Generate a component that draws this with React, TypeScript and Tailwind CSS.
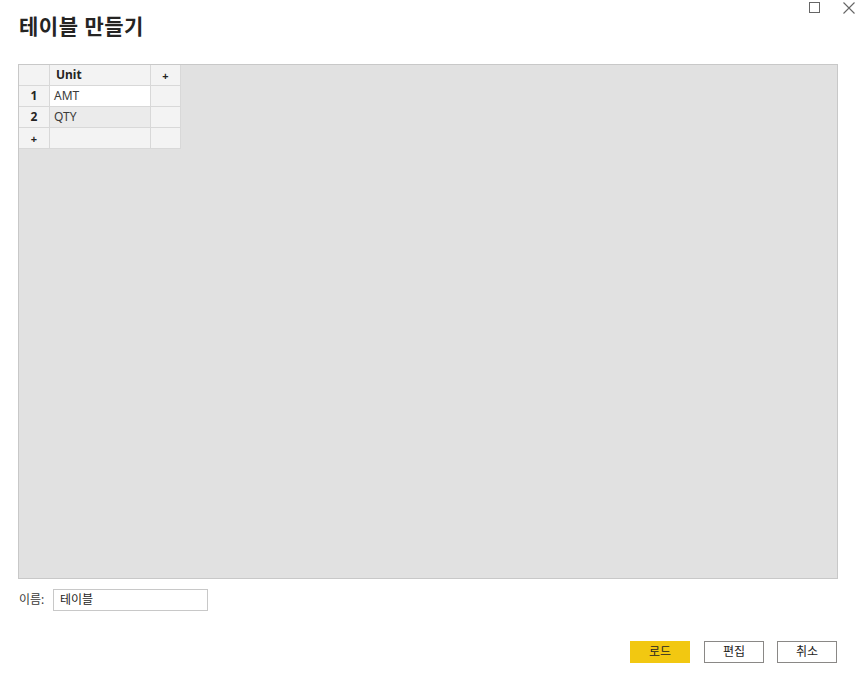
const font = { fontFamily: '"Noto Sans", "Noto Sans CJK KR", sans-serif' };

const rows = [
  { n: '1', v: 'AMT', bg: 'bg-white' },
  { n: '2', v: 'QTY', bg: 'bg-[#ebebeb]' },
];

export default function App() {
  return (
    <div className="relative w-[856px] h-[691px] bg-white text-[#252423] flex flex-col" style={font}>
      <div className="absolute top-[1px] right-0 flex items-start gap-[23px] pr-[1px]">
        <div className="w-[11px] h-[11px] border border-[#666] mt-[1px]" />
        <svg width="12" height="12" viewBox="0 0 12 12" className="mt-[1px]">
          <path d="M0.5 0.5 L11.5 11.5 M11.5 0.5 L0.5 11.5" stroke="#666" strokeWidth="1.1" />
        </svg>
      </div>

      <h1 className="pl-[19px] pt-[11px] h-[64px] text-[21px] font-bold leading-[30px] tracking-[0.5px]">테이블 만들기</h1>

      <div className="mx-[18px] w-[820px] h-[515px] border border-[#c8c8c8] bg-[#e1e1e1]">
        <div className="grid grid-cols-[31px_101px_30px] w-max text-[12px] leading-none">
          <div className="h-[21px] bg-[#f3f3f3] border-r border-b border-[#d8d8d8]" />
          <div className="h-[21px] bg-[#f3f3f3] border-r border-b border-[#d8d8d8] flex items-center pl-[6px] font-bold">Unit</div>
          <div className="h-[21px] bg-[#f3f3f3] border-r border-b border-[#d8d8d8] flex items-center justify-center font-bold text-[11px]">+</div>
          {rows.map((r) => (
            <div key={r.n} className="contents">
              <div className="h-[21px] bg-[#f3f3f3] border-r border-b border-[#d8d8d8] flex items-center justify-center font-bold">{r.n}</div>
              <div className={`h-[21px] ${r.bg} border-r border-b border-[#d8d8d8] flex items-center pl-[4px] text-[#3b3a39]`}>{r.v}</div>
              <div className="h-[21px] bg-[#f3f3f3] border-r border-b border-[#d8d8d8]" />
            </div>
          ))}
          <div className="h-[21px] bg-[#f3f3f3] border-r border-b border-[#d8d8d8] flex items-center justify-center font-bold text-[11px]">+</div>
          <div className="h-[21px] bg-[#f3f3f3] border-r border-b border-[#d8d8d8]" />
          <div className="h-[21px] bg-[#f3f3f3] border-r border-b border-[#d8d8d8]" />
        </div>
      </div>

      <div className="flex items-center pl-[19px] mt-[10px] h-[22px] text-[12px]">
        <span className="text-[#3b3a39] w-[34px]">이름:</span>
        <div className="w-[155px] h-[22px] border border-[#c8c8c8] flex items-center pl-[6px] text-[#252423]">테이블</div>
      </div>

      <div className="flex justify-end gap-[14px] pr-[19px] mt-[30px] text-[12px]">
        <button className="w-[60px] h-[22px] bg-[#f2c811] text-[#252423]">로드</button>
        <button className="w-[60px] h-[22px] border border-[#8a8886] bg-white">편집</button>
        <button className="w-[60px] h-[22px] border border-[#8a8886] bg-white -ml-[1px]">취소</button>
      </div>
    </div>
  );
}
